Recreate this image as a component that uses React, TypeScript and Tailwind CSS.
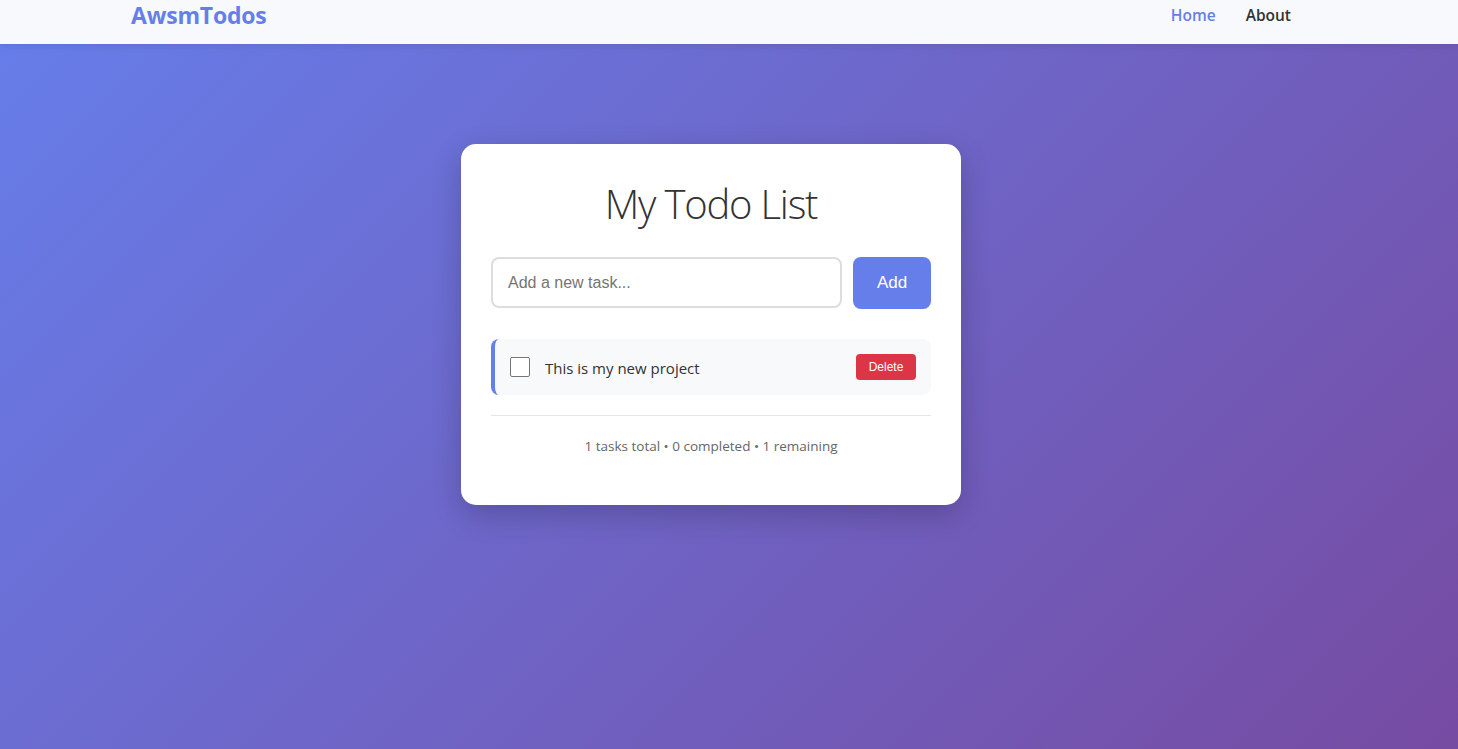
import React from "react";

export default function App() {
  return (
    <div className="min-h-[749px] w-full flex flex-col bg-[linear-gradient(135deg,#667eea_0%,#764ba2_100%)] font-['Open_Sans',sans-serif]">
      <nav className="h-[44px] bg-[#f8f9fc] pl-[131px] pr-[167px] shadow-[0_2px_8px_rgba(0,0,0,0.08)]">
        <div className="h-[31px] flex items-center justify-between">
          <div className="text-[23px] font-bold text-[#667eea] tracking-[-0.2px] leading-none">AwsmTodos</div>
          <div className="flex items-center gap-[30px] text-[15.5px] font-semibold leading-none">
            <span className="text-[#667eea]">Home</span>
            <span className="text-[#333]">About</span>
          </div>
        </div>
      </nav>
      <div className="flex justify-center pt-[100px] pr-[36px]">
        <div className="w-[500px] bg-white rounded-[15px] shadow-[0_10px_30px_rgba(0,0,0,0.2)] px-[30px] pt-[30px] pb-[49px]">
          <h1 className="text-center text-[40px] font-light text-[#333] leading-[60px] tracking-[-1.2px]">My Todo List</h1>
          <div className="flex gap-[11px] mt-[23px]">
            <input
              className="flex-1 h-[51px] border-2 border-[#ddd] rounded-[8px] px-[15px] text-[16px] font-['Liberation_Sans',sans-serif] placeholder:text-[#757575] outline-none"
              placeholder="Add a new task..."
            />
            <button className="w-[78px] h-[52px] bg-[#667eea] text-white rounded-[8px] text-[17px] font-['Liberation_Sans',sans-serif]">Add</button>
          </div>
          <div className="mt-[30px] h-[56px] bg-[#f8f9fa] rounded-[8px] border-l-4 border-[#667eea] flex items-center pl-[15px] pr-[15px]">
            <div className="w-[20px] h-[20px] border border-[#767676] rounded-[2px] bg-white" />
            <span className="ml-[15px] text-[15px] text-[#333] flex-1 pt-[2px]">This is my new project</span>
            <button className="w-[60px] h-[26px] bg-[#dc3545] text-white rounded-[4px] text-[12px] font-['Liberation_Sans',sans-serif]">Delete</button>
          </div>
          <div className="mt-[20px] border-t border-[#e5e5e5] pt-[20px] text-center text-[13.5px] text-[#666]">
            1 tasks total • 0 completed • 1 remaining
          </div>
        </div>
      </div>
    </div>
  );
}
